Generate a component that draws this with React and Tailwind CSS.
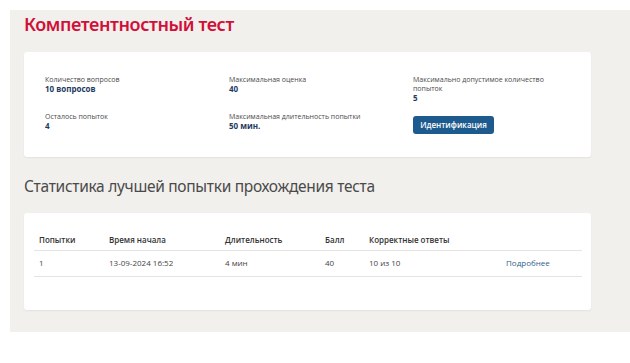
import React from "react";

const info = [
  { label: "Количество вопросов", value: "10 вопросов" },
  { label: "Максимальная оценка", value: "40" },
  { label: "Максимально допустимое количество попыток", value: "5" },
  { label: "Осталось попыток", value: "4" },
  { label: "Максимальная длительность попытки", value: "50 мин." },
];

const InfoItem = ({ label, value }) => (
  <div>
    <div className="text-[7px] leading-[9px] text-[#4a4a4a] max-w-[140px]">{label}</div>
    <div className="text-[8px] leading-[10px] font-bold text-[#1e3a5f]">{value}</div>
  </div>
);

const App = () => {
  return (
    <div className="w-[630px] h-[363px] bg-white pt-[10px] pl-[10px] font-['Open_Sans',sans-serif]">
      <div className="h-[322px] bg-[#f2f0ed] px-[14px] pt-0">
        <h1 className="text-[18px] leading-[28px] tracking-[-0.4px] font-semibold text-[#d0103a] font-['Noto_Sans',sans-serif]">
          Компетентностный тест
        </h1>

        <div className="mt-[14px] w-[567px] h-[105px] bg-white rounded-[3px] shadow-[0_1px_2px_rgba(0,0,0,0.06)] pl-[21px] pt-[23px]">
          <div className="grid grid-cols-[184px_184px_1fr] gap-y-[7px]">
            <InfoItem {...info[0]} />
            <InfoItem {...info[1]} />
            <InfoItem {...info[2]} />
            <div className="pt-[2px]">
              <InfoItem {...info[3]} />
            </div>
            <div className="pt-[2px]">
              <InfoItem {...info[4]} />
            </div>
            <div>
              <button className="w-[81px] h-[18px] bg-[#1d5a8e] rounded-[3px] text-white text-[8px] font-semibold">
                Идентификация
              </button>
            </div>
          </div>
        </div>

        <h2 className="mt-[17px] text-[15.5px] leading-[24px] tracking-[-0.3px] text-[#4a4a4a] font-['Noto_Sans',sans-serif]">
          Статистика лучшей попытки прохождения теста
        </h2>

        <div className="mt-[15px] w-[567px] h-[97px] bg-white rounded-[3px] shadow-[0_1px_2px_rgba(0,0,0,0.06)] px-[10px] pt-[21px]">
          <table className="w-[548px] text-[8px] text-[#444] border-collapse">
            <thead>
              <tr className="border-b border-[#e4e4e4]">
                <th className="text-left font-semibold text-[#333] pl-[5px] w-[75px] h-[16px] align-top">Попытки</th>
                <th className="text-left font-semibold text-[#333] w-[116px] align-top">Время начала</th>
                <th className="text-left font-semibold text-[#333] w-[100px] align-top">Длительность</th>
                <th className="text-left font-semibold text-[#333] w-[44px] align-top">Балл</th>
                <th className="text-left font-semibold text-[#333] w-[137px] align-top">Корректные ответы</th>
                <th className="text-left font-semibold text-[#333]"></th>
              </tr>
            </thead>
            <tbody>
              <tr className="border-b border-[#e4e4e4]">
                <td className="pl-[5px] h-[26px]">1</td>
                <td>13-09-2024 16:52</td>
                <td>4 мин</td>
                <td>40</td>
                <td>10 из 10</td>
                <td className="text-[#2f5f8f]">Подробнее</td>
              </tr>
            </tbody>
          </table>
        </div>
      </div>
    </div>
  );
};

export default App;
